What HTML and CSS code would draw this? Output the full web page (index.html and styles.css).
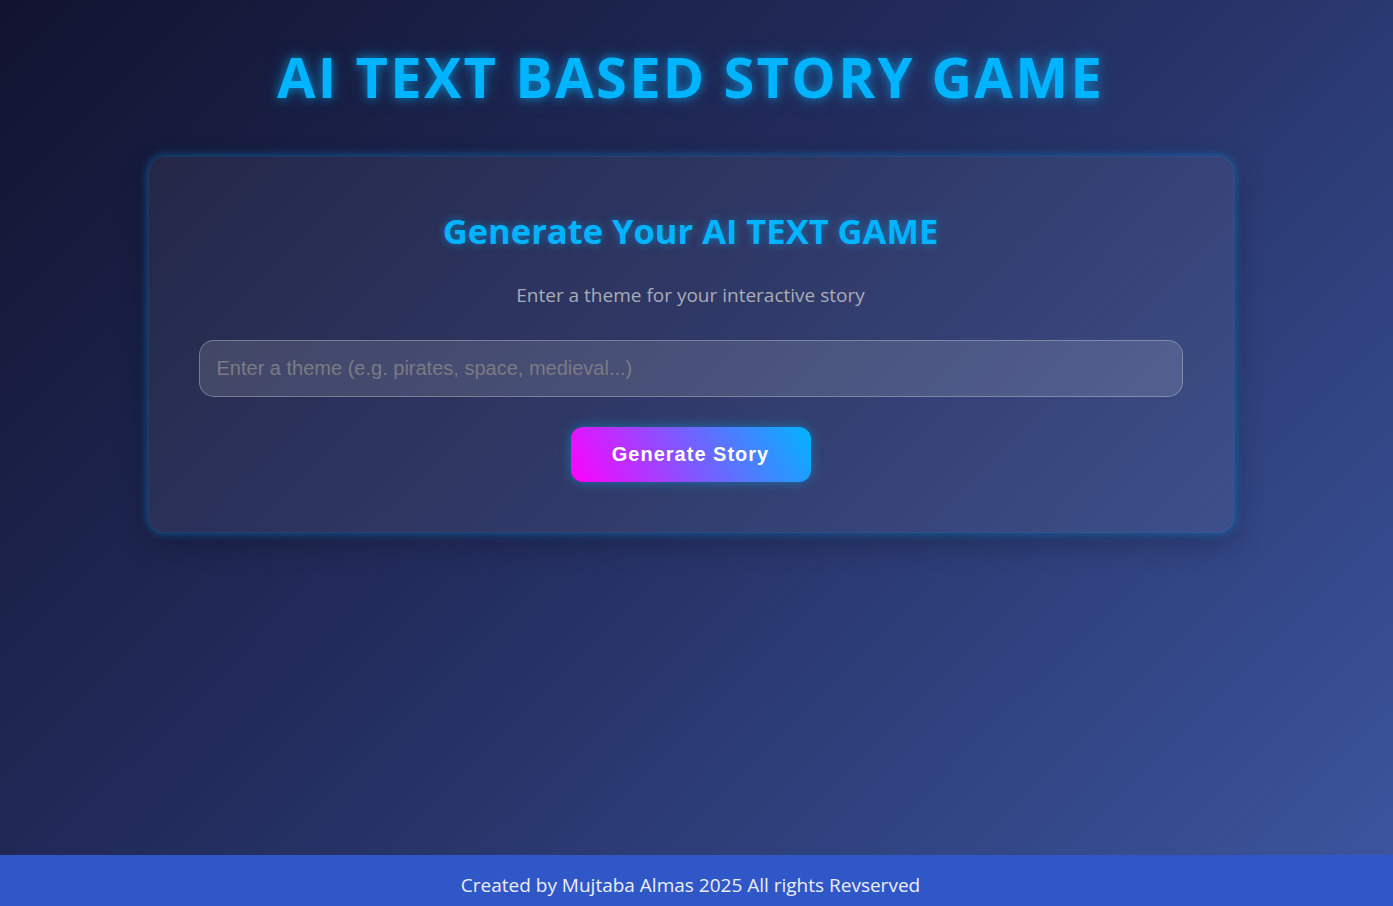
FILE: index.html
```html
<!DOCTYPE html>
<html lang="en">
<head>
<meta charset="utf-8">
<title>AI Text Based Story Game</title>
<link rel="stylesheet" href="styles.css">
</head>
<body>
<main class="page">
  <h1 class="title">AI TEXT BASED STORY GAME</h1>
  <section class="card">
    <h2 class="card-title">Generate Your AI TEXT GAME</h2>
    <p class="card-sub">Enter a theme for your interactive story</p>
    <input class="theme-input" type="text" placeholder="Enter a theme (e.g. pirates, space, medieval...)">
    <button class="gen-btn" type="button">Generate Story</button>
  </section>
</main>
<footer class="footer">Created by Mujtaba Almas 2025 All rights Revserved</footer>
</body>
</html>
```
FILE: styles.css
```css
* { box-sizing: border-box; }
html, body { height: 100%; }
body {
  margin: 0;
  min-height: 100vh;
  display: flex;
  flex-direction: column;
  font-family: "Open Sans", "Noto Sans", sans-serif;
  background: linear-gradient(135deg, #11132f 0%, #232d5e 45%, #3c569f 100%);
  color: #fff;
}
.page {
  flex: 1;
  display: flex;
  flex-direction: column;
  align-items: center;
  padding: 40px 12px 0 0;
}
.title {
  margin: 0;
  font-size: 56px;
  line-height: 72px;
  font-weight: 700;
  letter-spacing: 2.3px;
  color: #00b4ff;
  text-shadow: 0 0 10px rgba(0, 180, 255, 0.6), 0 0 20px rgba(0, 180, 255, 0.3);
}
.card {
  margin-top: 44px;
  width: 1086px;
  padding: 50px 50px 50px;
  border-radius: 16px;
  background: rgba(255, 255, 255, 0.06);
  border: 1px solid rgba(0, 180, 255, 0.1);
  box-shadow: 0 0 10px rgba(0, 160, 255, 0.5), 0 10px 30px rgba(0, 0, 0, 0.25);
  display: flex;
  flex-direction: column;
  align-items: center;
}
.card-title {
  margin: 0;
  font-size: 34.5px;
  line-height: 48px;
  font-weight: 700;
  color: #00b4ff;
  text-shadow: 0 0 8px rgba(0, 180, 255, 0.5);
}
.card-sub {
  margin: 27px 0 0;
  font-size: 19px;
  line-height: 26px;
  color: #a9abb8;
}
.theme-input {
  margin-top: 32px;
  width: 100%;
  height: 57px;
  padding: 0 17px;
  border-radius: 15px;
  border: 1px solid rgba(255, 255, 255, 0.28);
  background: rgba(255, 255, 255, 0.12);
  font-family: "Liberation Sans", Arial, sans-serif;
  font-size: 20px;
  color: #fff;
  outline: none;
}
.theme-input::placeholder { color: #7a7b84; }
.gen-btn {
  margin-top: 30px;
  width: 240px;
  height: 55px;
  border: none;
  border-radius: 12px;
  background: linear-gradient(60deg, #ff00ff 0%, #7a5cff 50%, #00b4ff 100%);
  font-family: "Liberation Sans", Arial, sans-serif;
  font-size: 20px;
  font-weight: 700;
  letter-spacing: 1px;
  color: #fff;
  box-shadow: 0 0 12px rgba(0, 180, 255, 0.45);
  cursor: pointer;
}
.footer {
  height: 51px;
  background: #3057c8;
  display: flex;
  align-items: center;
  justify-content: center;
  padding: 8px 12px 0 0;
  font-size: 19px;
  color: #eceef6;
}
```
